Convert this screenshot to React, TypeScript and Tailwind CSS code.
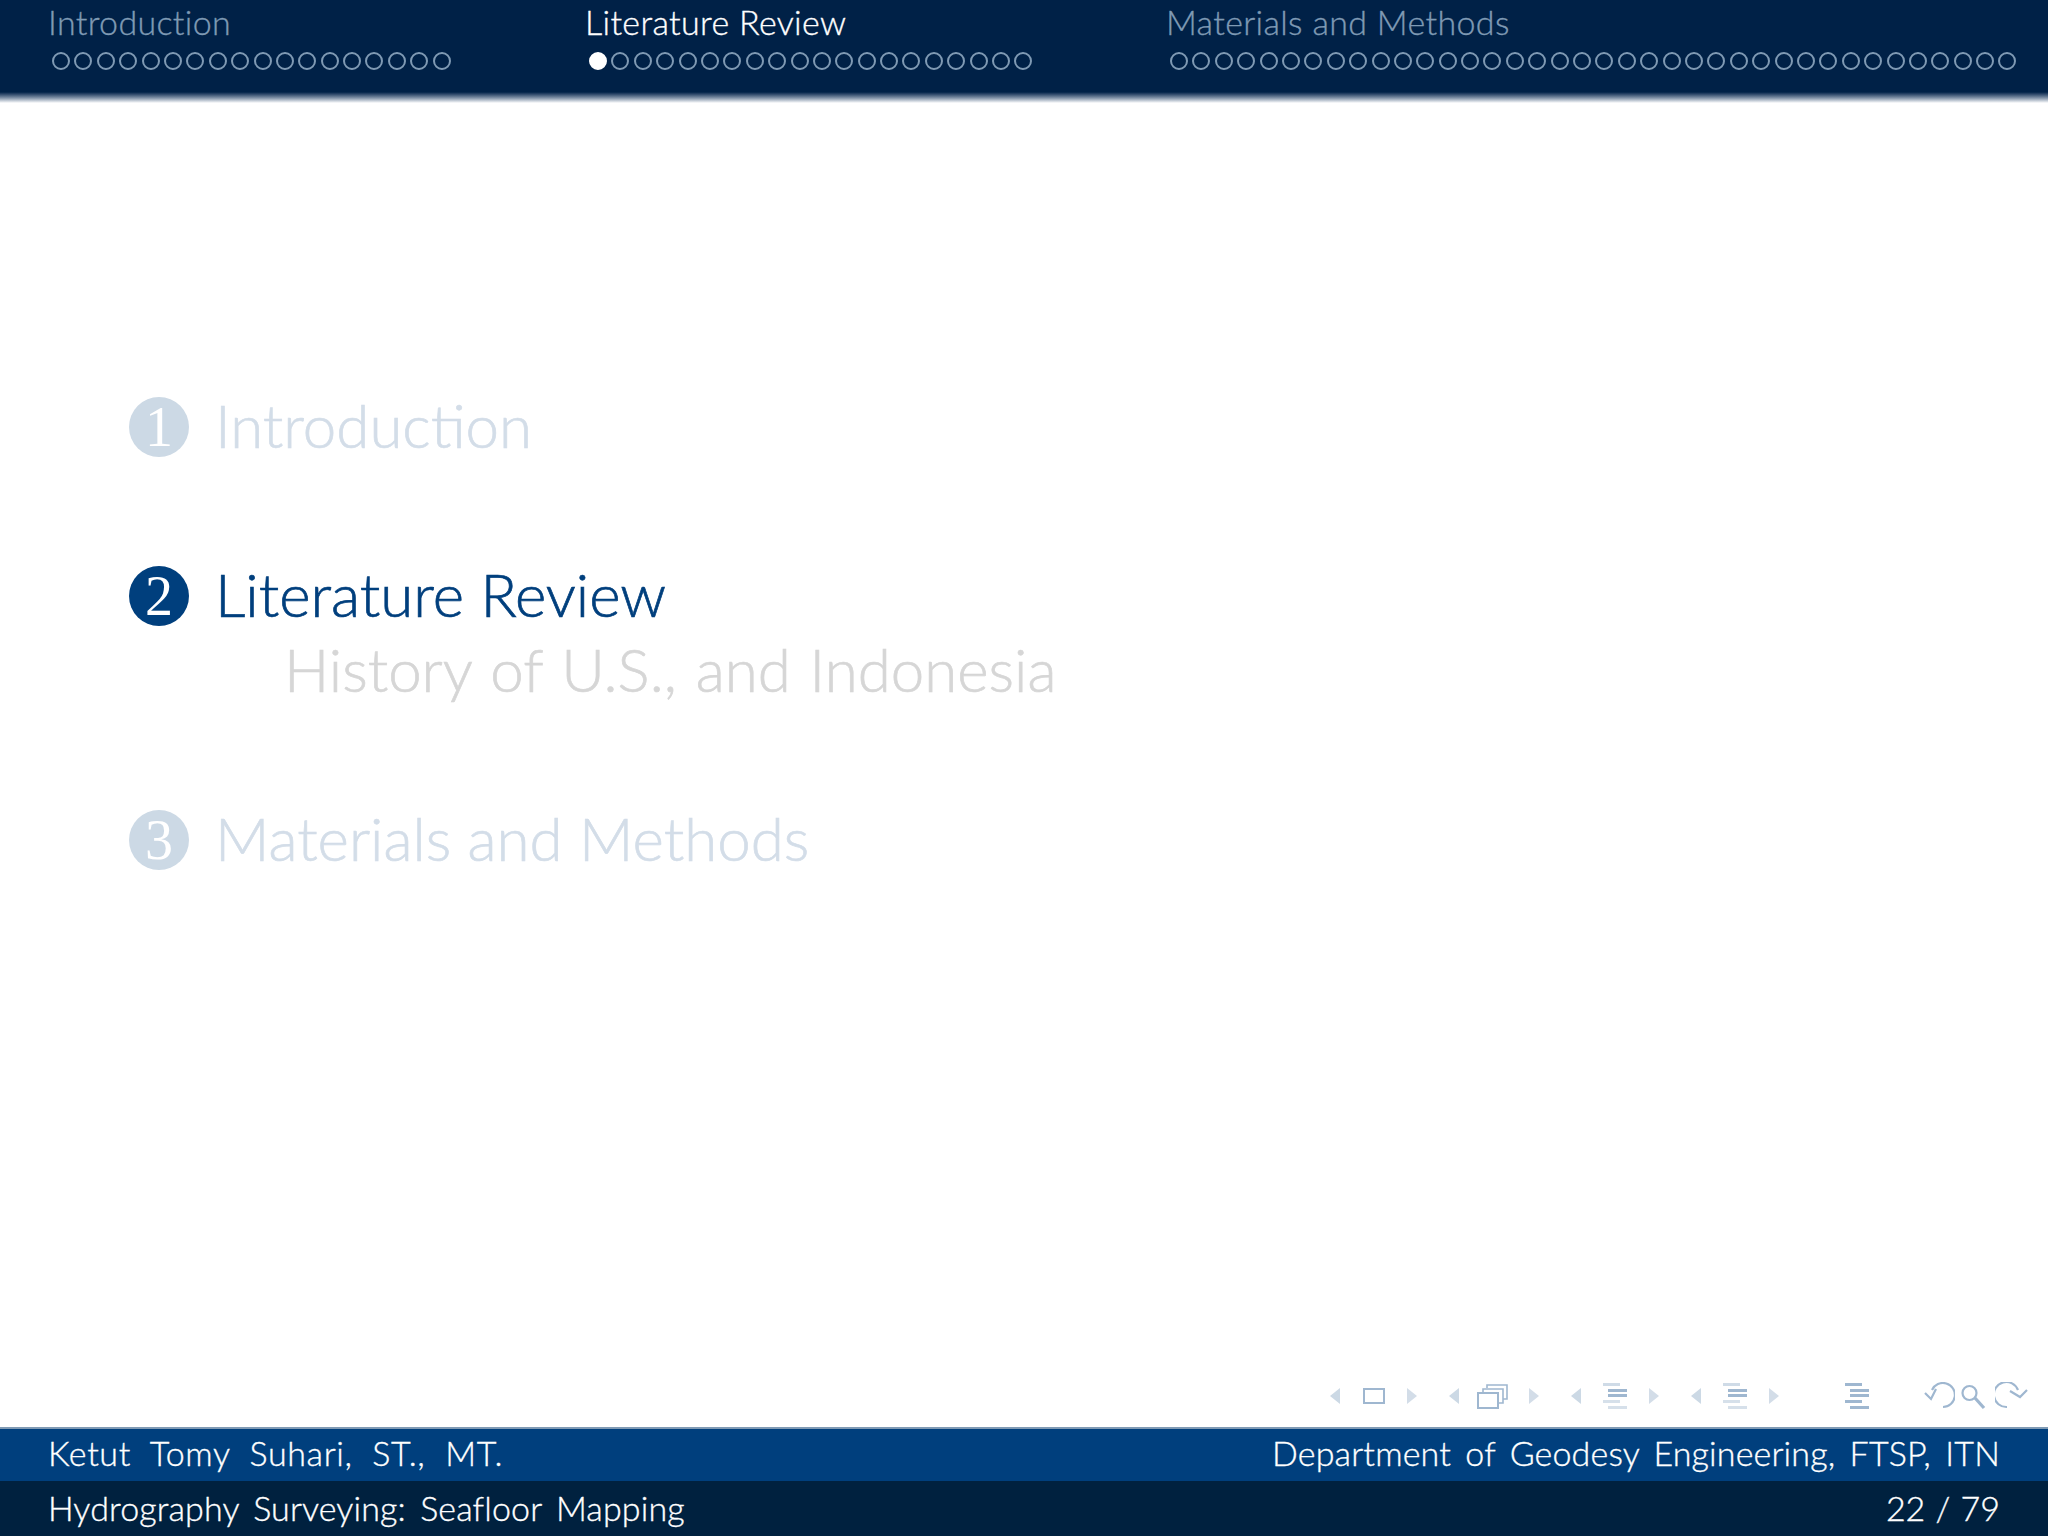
const sections = [
  { title: 'Introduction', dots: 18, active: false },
  { title: 'Literature Review', dots: 20, active: true },
  { title: 'Materials and Methods', dots: 38, active: false },
]

function Arrow({ dir, tone }: { dir: 'left' | 'right'; tone: string }) {
  return (
    <svg width="12" height="18" viewBox="0 0 12 18" className={tone}>
      {dir === 'left' ? <path d="M11 1V17L1 9Z" fill="currentColor" /> : <path d="M1 1V17L11 9Z" fill="currentColor" />}
    </svg>
  )
}

function ListIcon({ faded }: { faded?: boolean }) {
  return (
    <svg width="24" height="28" viewBox="0 0 24 28">
      <rect x="0" y="1" width="17" height="3" fill={faded ? '#cfdbe7' : '#9fb7d0'} />
      <rect x="5" y="7" width="19" height="3" fill="#9fb7d0" />
      <rect x="5" y="12" width="19" height="3" fill="#9fb7d0" />
      <rect x="0" y="18" width="17" height="3" fill={faded ? '#d6e0ea' : '#9fb7d0'} />
      <rect x="5" y="24" width="19" height="3" fill={faded ? '#d6e0ea' : '#9fb7d0'} />
    </svg>
  )
}

function NavBar() {
  return (
    <div className="flex h-[28px] items-center pl-[1329px]">
      <Arrow dir="left" tone="text-[#ccd9e5]" />
      <svg width="22" height="16" viewBox="0 0 22 16" className="ml-[22px]">
        <rect x="1" y="1" width="20" height="14" fill="none" stroke="#9fb7d0" strokeWidth="2" />
      </svg>
      <div className="ml-[21px]"><Arrow dir="right" tone="text-[#d3dde8]" /></div>
      <div className="ml-[30px]"><Arrow dir="left" tone="text-[#ccd9e5]" /></div>
      <svg width="31" height="25" viewBox="0 0 31 25" className="ml-[17px]">
        <path d="M10 4V1H30V15H26M6 8V5H26V19H21" fill="none" stroke="#9fb7d0" strokeWidth="1.6" />
        <rect x="1" y="9" width="20" height="15" fill="#fff" stroke="#9fb7d0" strokeWidth="2" />
      </svg>
      <div className="ml-[20px]"><Arrow dir="right" tone="text-[#d3dde8]" /></div>
      <div className="ml-[30px]"><Arrow dir="left" tone="text-[#ccd9e5]" /></div>
      <div className="ml-[21px]"><ListIcon faded /></div>
      <div className="ml-[21px]"><Arrow dir="right" tone="text-[#d3dde8]" /></div>
      <div className="ml-[30px]"><Arrow dir="left" tone="text-[#ccd9e5]" /></div>
      <div className="ml-[21px]"><ListIcon faded /></div>
      <div className="ml-[21px]"><Arrow dir="right" tone="text-[#d3dde8]" /></div>
      <div className="ml-[65px]"><ListIcon /></div>
      <svg width="32" height="28" viewBox="0 0 32 28" className="ml-[54px]" fill="none" stroke="#9fb7d0" strokeWidth="2.2">
        <path d="M9 8A12 12 0 1 1 20 25" />
        <path d="M2 11L8 17L13 7" />
      </svg>
      <svg width="26" height="28" viewBox="0 0 26 28" className="ml-[5px]" fill="none" stroke="#9fb7d0">
        <circle cx="9.5" cy="11" r="7" strokeWidth="2.2" />
        <path d="M15 16L24 26" strokeWidth="3.2" />
      </svg>
      <svg width="34" height="28" viewBox="0 0 34 28" className="ml-[9px]" fill="none" stroke="#9fb7d0" strokeWidth="2.2">
        <path d="M12 25A12.5 12.5 0 1 1 23 8" />
        <path d="M15 9L25 15L32 8" />
      </svg>
    </div>
  )
}

function TocRow({ n, title, active }: { n: number; title: string; active?: boolean }) {
  return (
    <div className="flex h-[60px] items-center pl-[129px]">
      <div
        className={`flex h-[60px] w-[60px] items-center justify-center rounded-full text-[56px] leading-none text-white ${
          active ? 'bg-[#003f7d]' : 'bg-[#ccd9e5]'
        }`}
        style={{ fontFamily: '"Liberation Serif", serif' }}
      >
        {n}
      </div>
      <div className={`ml-[26px] pb-[5px] text-[60px] font-light [-webkit-text-stroke:0.7px] ${active ? 'text-[#003f7d]' : 'text-[#d3dde8]'}`}>
        {title}
      </div>
    </div>
  )
}

export default function App() {
  return (
    <div
      className="flex h-[1536px] w-[2048px] flex-col overflow-hidden bg-white"
      style={{ fontFamily: 'Lato, "Open Sans", sans-serif' }}
    >
      <header className="grid h-[92px] grid-cols-[537px_581px_1fr] bg-[#002147] pl-[48px]">
        {sections.map((s) => (
          <div key={s.title}>
            <div className={`h-[46px] text-[34px] leading-[44px] font-light tracking-[0.33px] [-webkit-text-stroke:0.35px] ${s.active ? 'text-white' : 'text-[#7f9ab4]'}`}>
              {s.title}
            </div>
            <div className="ml-[4px] mt-[6px] flex gap-[4.4px]">
              {Array.from({ length: s.dots }).map((_, i) => (
                <span
                  key={i}
                  className={`h-[18px] w-[18px] rounded-full border-2 ${
                    s.active && i === 0 ? 'border-white bg-white' : 'border-[#7f9ab4]'
                  }`}
                />
              ))}
            </div>
          </div>
        ))}
      </header>
      <div className="h-[11px] bg-gradient-to-b from-[#002147] to-white" />

      <main className="flex flex-1 flex-col pt-[294px]">
        <TocRow n={1} title="Introduction" />
        <div className="mt-[109px]">
          <TocRow n={2} title="Literature Review" active />
        </div>
        <div className="mt-[13px] h-[63px] pl-[284px] text-[60px] leading-[60px] font-light text-[#d6d6d6] [-webkit-text-stroke:0.7px] [word-spacing:2.5px]">
          History of U.S., and Indonesia
        </div>
        <div className="mt-[108px]">
          <TocRow n={3} title="Materials and Methods" />
        </div>
        <div className="mt-auto pb-[17px]">
          <NavBar />
        </div>
      </main>

      <footer className="text-[34px] font-light text-white [-webkit-text-stroke:0.35px]">
        <div className="flex h-[54px] items-center justify-between border-t-2 border-[#7f9ab4] bg-[#003f7d] px-[48px] pb-[5px]">
          <span className="tracking-[0.6px] [word-spacing:10px]">Ketut Tomy Suhari, ST., MT.</span>
          <span className="tracking-[0.15px] [word-spacing:5px]">Department of Geodesy Engineering, FTSP, ITN</span>
        </div>
        <div className="flex h-[55px] items-center justify-between bg-[#00213f] px-[48px] pb-[3px]">
          <span className="tracking-[0.13px] [word-spacing:5px]">Hydrography Surveying: Seafloor Mapping</span>
          <span className="[word-spacing:1px]">22 / 79</span>
        </div>
      </footer>
    </div>
  )
}
